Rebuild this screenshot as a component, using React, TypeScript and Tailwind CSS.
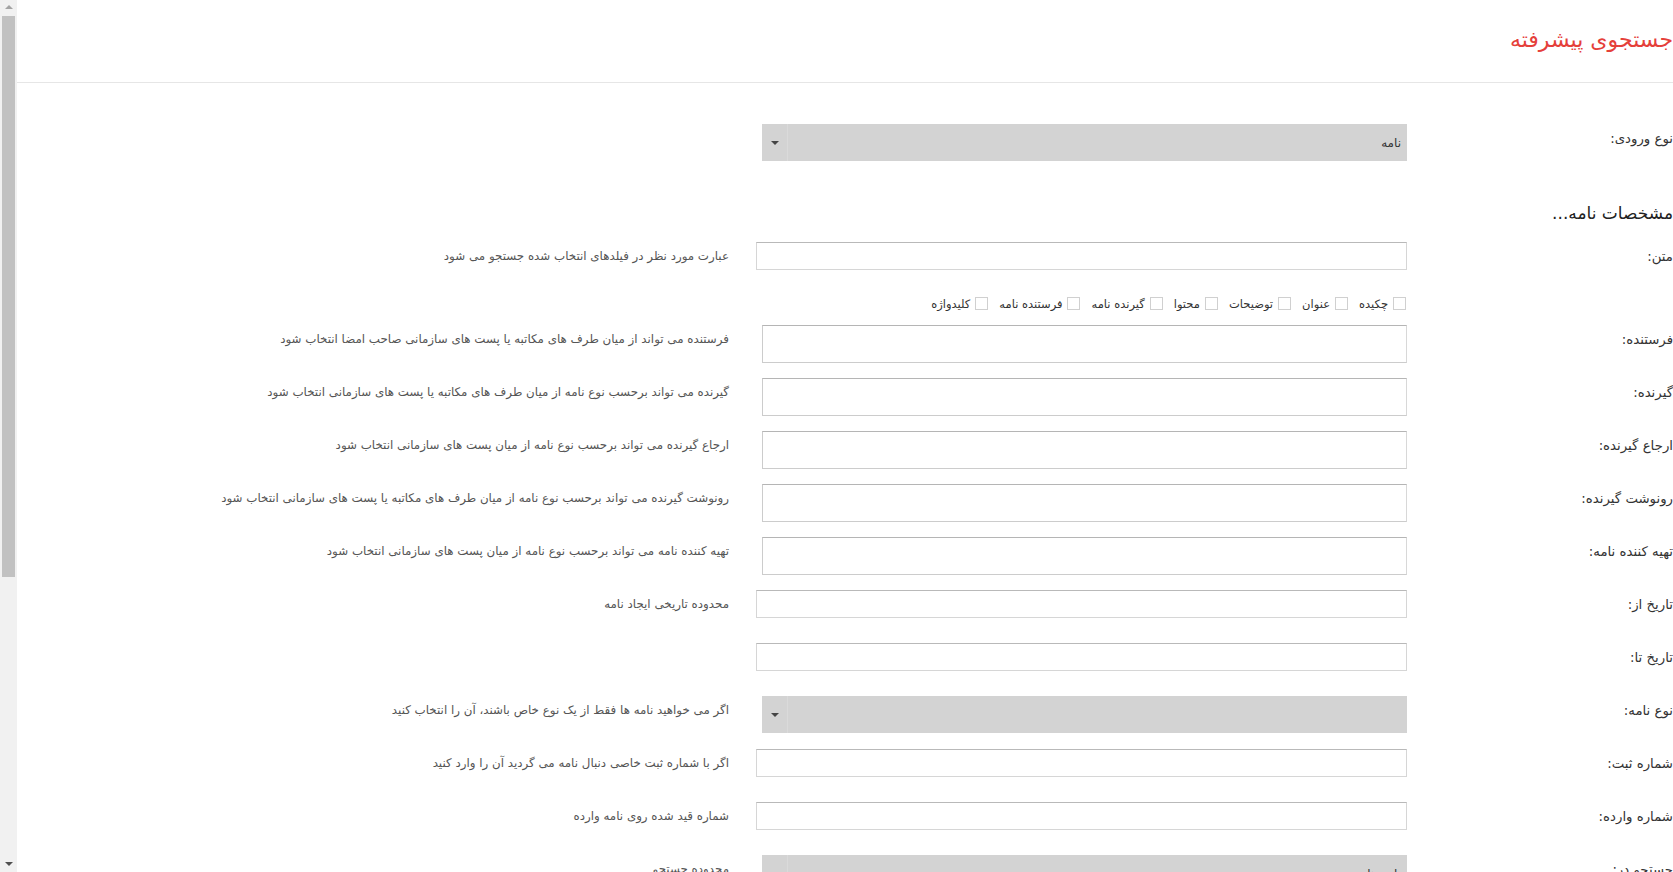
import React from "react";

const font = { fontFamily: '"DejaVu Sans", Tahoma, sans-serif' };

type Kind = "text" | "tall" | "select";

type Row = { label: string; kind: Kind; hint?: string; value?: string };

const people: Row[] = [
  { label: "فرستنده:", kind: "tall", hint: "فرستنده می تواند از میان طرف های مکاتبه یا پست های سازمانی صاحب امضا انتخاب شود" },
  { label: "گیرنده:", kind: "tall", hint: "گیرنده می تواند برحسب نوع نامه از میان طرف های مکاتبه یا پست های سازمانی انتخاب شود" },
  { label: "ارجاع گیرنده:", kind: "tall", hint: "ارجاع گیرنده می تواند برحسب نوع نامه از میان پست های سازمانی انتخاب شود" },
  { label: "رونوشت گیرنده:", kind: "tall", hint: "رونوشت گیرنده می تواند برحسب نوع نامه از میان طرف های مکاتبه یا پست های سازمانی انتخاب شود" },
  { label: "تهیه کننده نامه:", kind: "tall", hint: "تهیه کننده نامه می تواند برحسب نوع نامه از میان پست های سازمانی انتخاب شود" },
  { label: "تاریخ از:", kind: "text", hint: "محدوده تاریخی ایجاد نامه" },
  { label: "تاریخ تا:", kind: "text" },
  { label: "نوع نامه:", kind: "select", hint: "اگر می خواهید نامه ها فقط از یک نوع خاص باشند، آن را انتخاب کنید" },
  { label: "شماره ثبت:", kind: "text", hint: "اگر با شماره ثبت خاصی دنبال نامه می گردید آن را وارد کنید" },
  { label: "شماره وارده:", kind: "text", hint: "شماره قید شده روی نامه وارده" },
  { label: "جستجو در:", kind: "select", hint: "محدوده جستجو", value: "نامه ها" },
];

const fields = ["چکیده", "عنوان", "توضیحات", "محتوا", "گیرنده نامه", "فرستنده نامه", "کلیدواژه"];

function Select({ value }: { value?: string }) {
  return (
    <div className="flex h-[37px] w-[645px] items-center bg-[#d3d3d3] text-[12px] text-[#333]">
      <span className="flex-1 pr-[6px]">{value}</span>
      <span className="h-full w-px bg-[#dadada]" />
      <span className="flex w-[25px] items-center justify-center">
        <span className="h-0 w-0 border-x-[4px] border-t-[4px] border-x-transparent border-t-[#444]" />
      </span>
    </div>
  );
}

function Field({ kind, value }: { kind: Kind; value?: string }) {
  if (kind === "select") return <Select value={value} />;
  if (kind === "tall")
    return <div className="h-[38px] w-[645px] border border-[#ccc] border-t-[#b5b5b5] border-r-[#d8d8d8] bg-white" />;
  return <div className="h-[28px] w-[651px] border border-[#d6d6d6] border-t-[#b9b9b9] bg-white" />;
}

function FormRow({ row, className = "" }: { row: Row; className?: string }) {
  return (
    <div className={"flex items-start " + className}>
      <div className="h-[28px] w-[266px] shrink-0 text-[13.3px] leading-[29px] text-[#333] whitespace-nowrap">{row.label}</div>
      <div className="w-[651px] shrink-0">
        <Field kind={row.kind} value={row.value} />
      </div>
      <div className="h-[28px] pr-[27px] text-[11.85px] leading-[28px] text-[#555] whitespace-nowrap">{row.hint}</div>
    </div>
  );
}

function Scrollbar() {
  return (
    <div className="relative h-full w-[17px] shrink-0 bg-[#f1f1f1]">
      <span className="absolute left-[5px] top-[5px] h-0 w-0 border-x-[4px] border-b-[4px] border-x-transparent border-b-[#a3a3a3]" />
      <div className="absolute left-[2px] top-[16px] h-[561px] w-[13px] bg-[#c1c1c1]" />
      <span className="absolute bottom-[6px] left-[5px] h-0 w-0 border-x-[4px] border-t-[4px] border-x-transparent border-t-[#505050]" />
    </div>
  );
}

export default function App() {
  return (
    <div className="flex h-[872px] w-[1673px] overflow-hidden bg-white" style={font}>
      <Scrollbar />
      <div dir="rtl" className="flex-1 overflow-hidden">
        <header className="flex h-[83px] items-center border-b border-[#e6e6e6] pb-[3px]">
          <h1 className="text-[22px] text-[#e5403a]">جستجوی پیشرفته</h1>
        </header>

        <FormRow className="mt-[41px]" row={{ label: "نوع ورودی:", kind: "select", value: "نامه" }} />

        <h2 className="mt-[40px] h-[24px] text-[17px] leading-[24px] text-[#222]">مشخصات نامه...</h2>

        <FormRow className="mt-[17px]" row={{ label: "متن:", kind: "text", hint: "عبارت مورد نظر در فیلدهای انتخاب شده جستجو می شود" }} />

        <div className="mt-[23px] flex h-[24px] items-center">
          <div className="w-[266px] shrink-0" />
          <div className="flex items-center gap-[11px] pr-[1px]">
            {fields.map((f) => (
              <label key={f} className="flex items-center gap-[5px] text-[11.5px] text-[#333]">
                <span className="mb-[3px] h-[13px] w-[13px] border border-[#d0d0d0] bg-white" />
                <span>{f}</span>
              </label>
            ))}
          </div>
        </div>

        <div className="mt-[8px]">
          {people.map((r) => (
            <FormRow key={r.label} className="h-[53px]" row={r} />
          ))}
        </div>
      </div>
    </div>
  );
}
